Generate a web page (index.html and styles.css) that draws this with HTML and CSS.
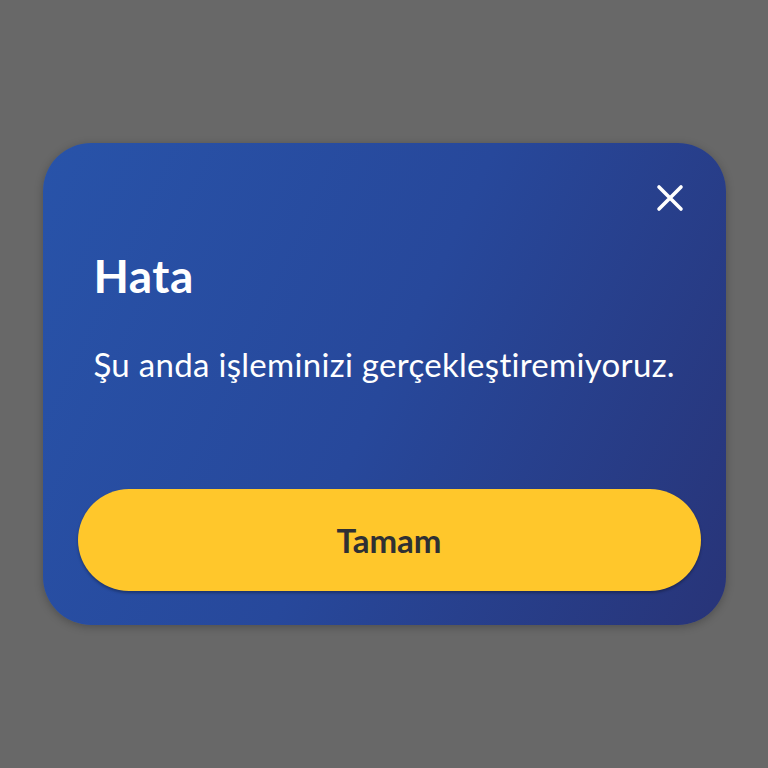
FILE: index.html
```html
<!DOCTYPE html>
<html lang="tr">
<head>
  <meta charset="UTF-8">
  <meta name="viewport" content="width=device-width, initial-scale=1.0">
  <link rel="stylesheet" href="styles.css">
  <title>Hata</title>
</head>
<body>
  <div class="dialog">
    <div class="dialog-top">
      <button class="close" aria-label="Kapat">
        <svg width="28" height="28" viewBox="0 0 28 28">
          <path d="M3 3 L25 25 M25 3 L3 25" stroke="#fff" stroke-width="3.6" stroke-linecap="round" fill="none"/>
        </svg>
      </button>
    </div>
    <h1 class="title">Hata</h1>
    <p class="message">Şu anda işleminizi gerçekleştiremiyoruz.</p>
    <button class="ok">Tamam</button>
  </div>
</body>
</html>
```

FILE: styles.css
```css
body {
  margin: 0;
  height: 768px;
  background: #686868;
  font-family: 'Lato', 'Noto Sans', sans-serif;
  display: flex;
  justify-content: center;
  align-items: flex-start;
}

.dialog {
  margin-top: 143px;
  width: 683px;
  height: 482px;
  box-sizing: border-box;
  border-radius: 48px;
  background: linear-gradient(115deg, #2853a9 0%, #27489b 50%, #283478 100%);
  box-shadow: 0 2px 8px rgba(0, 0, 0, 0.25);
  padding: 41px 25px 34px 35px;
  display: flex;
  flex-direction: column;
}

.dialog-top {
  display: flex;
  justify-content: flex-end;
  padding-right: 17px;
}

.close {
  background: none;
  border: 0;
  padding: 0;
  width: 28px;
  height: 28px;
  cursor: pointer;
}

.title {
  margin: 36px 0 0 16px;
  color: #fff;
  font-size: 46px;
  font-weight: 700;
  line-height: 1.2;
  letter-spacing: 0.5px;
}

.message {
  margin: 42px 0 0 16px;
  color: #fff;
  font-size: 33px;
  line-height: 1.2;
  letter-spacing: 0.3px;
}

.ok {
  margin-top: auto;
  height: 102px;
  border: 0;
  border-radius: 51px;
  background: #ffc72b;
  color: #2f3033;
  font-family: 'Lato', sans-serif;
  font-size: 33px;
  font-weight: 700;
  cursor: pointer;
  box-shadow: 0 2px 3px rgba(0, 0, 0, 0.3);
}
```
